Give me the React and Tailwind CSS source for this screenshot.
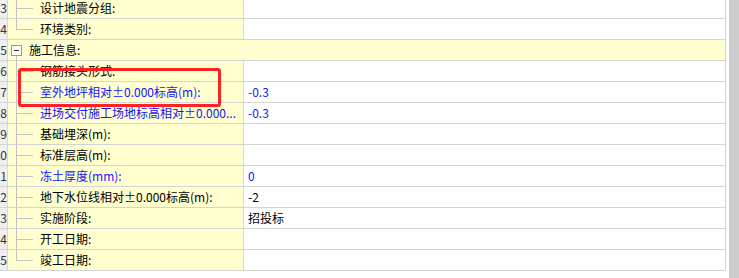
import React from 'react';

const rows = [
  { no: '13', label: '设计地震分组:', tree: 'mid' },
  { no: '14', label: '环境类别:', tree: 'end' },
  { no: '15', label: '施工信息:', group: true },
  { no: '16', label: '钢筋接头形式:', tree: 'mid' },
  { no: '17', label: '室外地坪相对±0.000标高(m):', tree: 'mid', blue: true, value: '-0.3', valueBlue: true },
  { no: '18', label: '进场交付施工场地标高相对±0.000...', tree: 'mid', blue: true, value: '-0.3', valueBlue: true },
  { no: '19', label: '基础埋深(m):', tree: 'mid' },
  { no: '20', label: '标准层高(m):', tree: 'mid' },
  { no: '21', label: '冻土厚度(mm):', tree: 'mid', blue: true, value: '0', valueBlue: true },
  { no: '22', label: '地下水位线相对±0.000标高(m):', tree: 'mid', value: '-2' },
  { no: '23', label: '实施阶段:', tree: 'mid', value: '招投标' },
  { no: '24', label: '开工日期:', tree: 'mid' },
  { no: '25', label: '竣工日期:', tree: 'end' },
];

const Row = ({ row }) => {
  return (
    <div className="flex h-[21px] border-b border-[#d4d4d4]">
      {/* 行号 */}
      <div className="w-[8px] shrink-0 overflow-hidden bg-[#f0f0f0] border-r border-[#d8d8d8] flex items-center justify-end text-[12px] text-[#333]">
        <span className="whitespace-nowrap">{row.no}</span>
      </div>

      {row.group ? (
        <div className="flex-1 bg-[#ffffd0] flex items-center relative">
          <span className="absolute left-[8px] top-[16px] bottom-[-1px] w-px bg-[#c4c4c4]" />
          <span className="ml-[3px] w-[11px] h-[11px] border border-[#9a9a9a] bg-white flex items-center justify-center">
            <span className="w-[5px] h-px bg-[#333]" />
          </span>
          <span className="ml-[7px] text-[12px] text-black whitespace-nowrap">{row.label}</span>
        </div>
      ) : (
        <>
          <div className="w-[236px] shrink-0 bg-[#ffffd0] border-r border-[#dcdcc4] relative flex items-center overflow-hidden">
            <span
              className={`absolute left-[8px] top-[-1px] w-px bg-[#c4c4c4] ${row.tree === 'end' ? 'h-[11px]' : 'bottom-[-1px]'}`}
            />
            <span className="absolute left-[8px] top-[10px] w-[17px] h-px bg-[#c4c4c4]" />
            <span
              className={`ml-[32px] pr-[6px] text-[12px] whitespace-nowrap overflow-hidden ${row.blue ? 'text-[#1414ff]' : 'text-black'}`}
            >
              {row.label}
            </span>
          </div>
          <div className={`flex-1 flex items-center pl-[4px] text-[12px] bg-white ${row.valueBlue ? 'text-[#1414ff]' : 'text-black'}`}>
            {row.value}
          </div>
        </>
      )}
    </div>
  );
};

export default function App() {
  return (
    <div
      className="relative w-[739px] h-[278px] overflow-hidden bg-white flex"
      style={{ fontFamily: '"Noto Sans CJK SC", "Liberation Sans", sans-serif' }}
    >
      <div className="w-[726px] shrink-0 -mt-[2px] border-r border-[#d4d4d4] self-start">
        {rows.map((r) => (
          <Row key={r.no} row={r} />
        ))}
      </div>
      <div className="w-[3px] shrink-0" />
      <div className="w-[10px] shrink-0 bg-[#cdcdcd]" />

      {/* 红色标注框 */}
      <div className="absolute left-[18px] top-[68px] w-[203px] h-[39px] border-[3px] border-[#ff2222] rounded-[3px] pointer-events-none" />
    </div>
  );
}
